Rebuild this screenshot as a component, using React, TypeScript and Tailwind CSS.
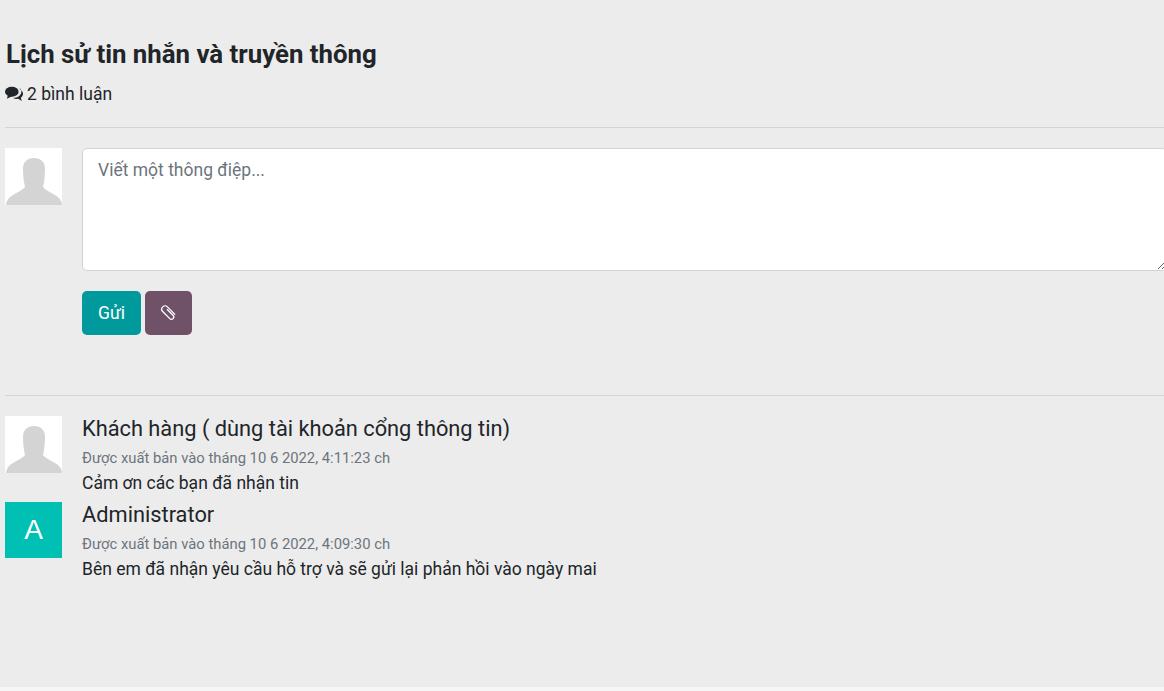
function Avatar() {
  return (
    <div className="w-[57px] h-[57px] shrink-0 bg-white overflow-hidden">
      <svg viewBox="0 0 57 57" className="w-full h-full">
        <path
          fill="#d4d4d4"
          d="M29 10c-7 0-11 4-11 11 0 5 .5 10 1 13l1 5c-3 4-12 7-16 11-2 2-3 5-3 7h56c0-2-1-5-3-7-4-4-13-7-16-11l1-5c.5-3 1-8 1-13 0-7-4-11-11-11z"
        />
      </svg>
    </div>
  );
}

function Comment({
  avatar,
  author,
  date,
  body,
}: {
  avatar: React.ReactNode;
  author: string;
  date: string;
  body: string;
}) {
  return (
    <div className="flex gap-5 h-[86px]">
      {avatar}
      <div className="flex flex-col">
        <div className="text-[21.8px] leading-[25px] text-[#212529]">{author}</div>
        <div className="mt-[9px] text-[14.8px] leading-[16px] text-[#6c757d]">{date}</div>
        <div className="mt-[7px] text-[17.5px] leading-[20px] text-[#212529]">{body}</div>
      </div>
    </div>
  );
}

export default function App() {
  return (
    <div className="h-[691px] overflow-hidden bg-[#f6f6f6] font-['Roboto',sans-serif]">
      <div className="h-[687px] bg-[#ececec] pl-[5px]">
        <h3 className="ml-px pt-[38px] text-[25.8px] leading-[32px] font-bold text-[#212529]">
          Lịch sử tin nhắn và truyền thông
        </h3>
        <div className="mt-[12px] flex items-center gap-1 text-[17.5px] leading-[24px] text-[#212529]">
          <svg viewBox="0 0 18 16" className="w-[18px] h-[16px] shrink-0" fill="currentColor">
            <ellipse cx="6.800" cy="5.700" rx="6.800" ry="5" />
            <path d="M3 9 1.800 12.800 7.500 10z" />
            <path d="M14.800 3.200C16.800 4.200 18 6 18 7.800c0 1.600-.9 3-2.200 4l1 3.200-3.600-2.200c-1.700.3-3.500.1-5-.8 4.500 0 8-2.700 8.200-6.200 0-1.200-.5-2.500-1.600-3.600z" />
          </svg>
          <span>2 bình luận</span>
        </div>
        <hr className="mt-[21px] border-t border-[#d4d4d4]" />

        <div className="mt-5 flex gap-5">
          <Avatar />
          <div className="flex-1 min-w-0">
            <textarea
              className="block w-[calc(100%+3px)] h-[123px] rounded-[5px] border border-[#ced4da] bg-white px-[15px] py-[8px] text-[17.5px] leading-[26px] text-[#212529] placeholder:text-[#6c757d] outline-none"
              placeholder="Viết một thông điệp..."
            />
            <div className="mt-5 flex gap-1">
              <button className="h-[44px] w-[59px] rounded-[5px] bg-[#019a9c] text-[17.5px] text-white">
                Gửi
              </button>
              <button className="h-[44px] w-[47px] rounded-[5px] bg-[#6f5268] text-white flex items-center justify-center">
                <svg viewBox="-10 -10 20 20" className="w-[20px] h-[20px]" fill="none" stroke="currentColor" strokeWidth="1.300">
                  <g transform="rotate(-45)">
                    <path d="M1.200-4V4.500a2.300 2.300 0 0 1-4.600 0V-5.500a3.300 3.300 0 0 1 6.600 0V5.500" />
                  </g>
                </svg>
              </button>
            </div>
          </div>
        </div>

        <hr className="mt-[60px] border-t border-[#d4d4d4]" />

        <div className="mt-5">
          <Comment
            avatar={<Avatar />}
            author="Khách hàng ( dùng tài khoản cổng thông tin)"
            date="Được xuất bản vào tháng 10 6 2022, 4:11:23 ch"
            body="Cảm ơn các bạn đã nhận tin"
          />
          <Comment
            avatar={
              <div className="w-[57px] h-[56px] shrink-0 bg-[#00bfb3] text-white text-[28px] font-['Liberation_Sans',sans-serif] flex items-center justify-center">
                A
              </div>
            }
            author="Administrator"
            date="Được xuất bản vào tháng 10 6 2022, 4:09:30 ch"
            body="Bên em đã nhận yêu cầu hỗ trợ và sẽ gửi lại phản hồi vào ngày mai"
          />
        </div>
      </div>
    </div>
  );
}
